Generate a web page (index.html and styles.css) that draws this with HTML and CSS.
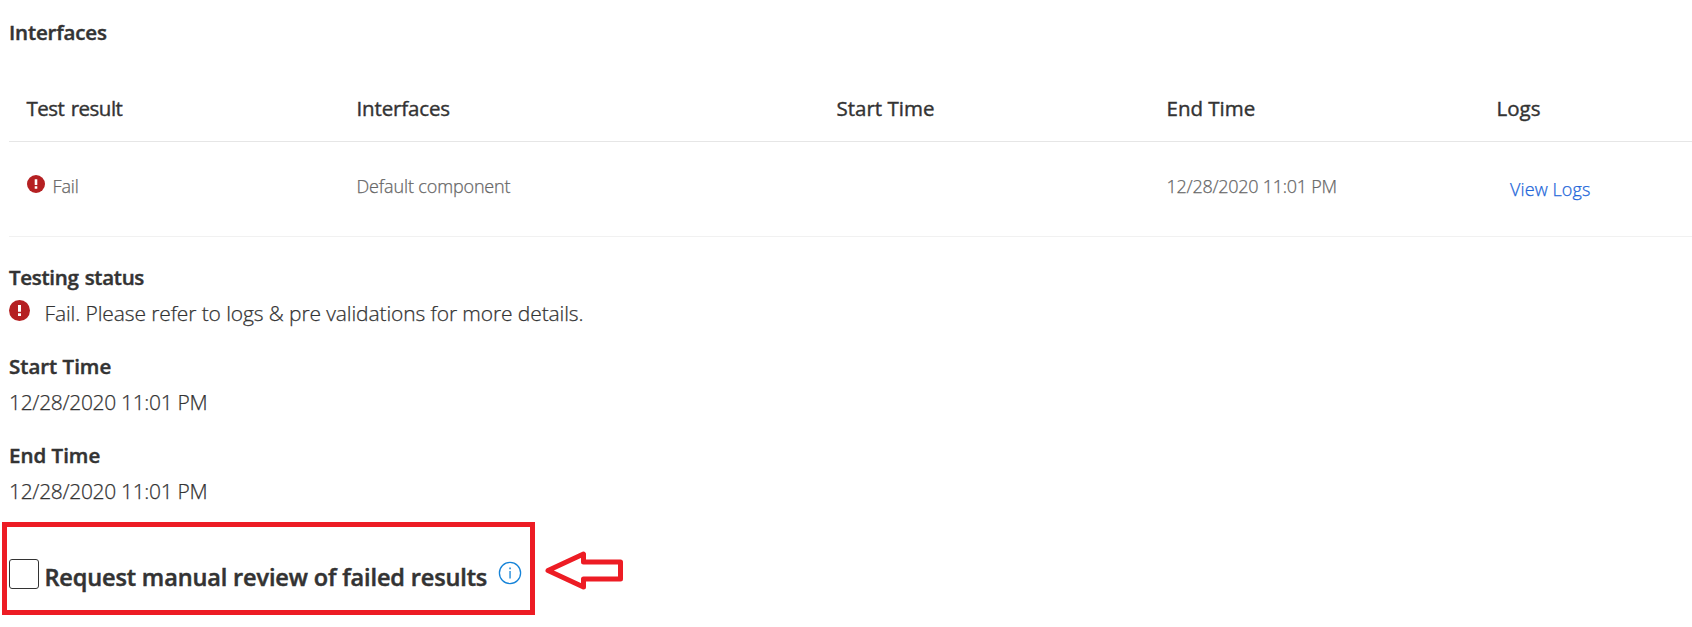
FILE: index.html
```html
<!DOCTYPE html>
<html lang="en">
<head>
<meta charset="utf-8">
<title>Test results</title>
<link rel="stylesheet" href="styles.css">
</head>
<body>
<main class="page">
  <h2 class="heading interfaces-heading">Interfaces</h2>

  <section class="table">
    <div class="row head">
      <span class="th-result">Test result</span>
      <span class="th-interfaces">Interfaces</span>
      <span class="th-start">Start Time</span>
      <span class="th-end">End Time</span>
      <span>Logs</span>
    </div>
    <div class="row body">
      <span class="result">
        <svg class="fail-icon small" viewBox="0 0 21 21"><circle cx="10.5" cy="10.5" r="10.5" fill="#b52022"/><path d="M9 5h3v6.8H9zM9 13.2h3v2.8H9z" fill="#fff"/></svg>
        <span>Fail</span>
      </span>
      <span>Default component</span>
      <span></span>
      <span class="date">12/28/2020 11:01 PM</span>
      <a class="view-logs">View Logs</a>
    </div>
  </section>

  <section class="field testing">
    <h3 class="heading testing-heading">Testing status</h3>
    <p class="value status">
      <svg class="fail-icon" viewBox="0 0 21 21"><circle cx="10.5" cy="10.5" r="10.5" fill="#b52022"/><path d="M9 5h3v6.8H9zM9 13.2h3v2.8H9z" fill="#fff"/></svg>
      <span>Fail. Please refer to logs &amp; pre validations for more details.</span>
    </p>
  </section>
  <section class="field">
    <h3 class="heading">Start Time</h3>
    <p class="value date-value">12/28/2020 11:01 PM</p>
  </section>
  <section class="field">
    <h3 class="heading end-heading">End Time</h3>
    <p class="value date-value">12/28/2020 11:01 PM</p>
  </section>

  <div class="review">
    <label class="review-box">
      <span class="checkbox"></span>
      <span class="review-label">Request manual review of failed results</span>
      <svg class="info" viewBox="0 0 24 24"><circle cx="12" cy="12" r="10.6" fill="none" stroke="#1583d8" stroke-width="1.3"/><path d="M11.4 10h1.3v7.5h-1.3zM11.3 6.600h1.5v1.6h-1.5z" fill="#1583d8"/></svg>
    </label>
    <svg class="arrow" viewBox="0 0 80 42"><path d="M3 20.5 38.5 4v8H75.500v17H38.500v8z" fill="#fff" stroke="#ed1c24" stroke-width="5" stroke-linejoin="round"/></svg>
  </div>
</main>
</body>
</html>
```
FILE: styles.css
```css
* { box-sizing: border-box; }
body {
  margin: 0;
  overflow: hidden;
  background: #fff;
  color: #333;
  font-family: "Open Sans", "Noto Sans", sans-serif;
}
h2, h3, p { margin: 0; }
.page { padding: 18px 0 0 9px; }
.heading {
  font-size: 20.5px;
  line-height: 28px;
  font-weight: 600;
  letter-spacing: 0;
  -webkit-text-stroke: 0.45px #333;
}
.interfaces-heading { letter-spacing: -0.15px; }
.testing-heading { letter-spacing: -0.28px; word-spacing: 1px; }

.table { margin-top: 48px; }
.row {
  display: grid;
  grid-template-columns: 330px 480px 330px 330px 1fr;
  padding-left: 17.5px;
  white-space: nowrap;
}
.head {
  height: 48px;
  border-bottom: 1px solid #e6e6e6;
  font-size: 20.5px;
  line-height: 28px;
  -webkit-text-stroke: 0.4px #333;
}
.th-result { letter-spacing: -0.5px; word-spacing: 1.5px; }
.th-interfaces { letter-spacing: -0.15px; }
.body {
  height: 95px;
  padding-top: 32px;
  border-bottom: 1px solid #f1f1f1;
  color: #666;
  font-size: 18px;
  line-height: 25px;
  font-weight: 300;
  letter-spacing: -0.14px;
  -webkit-text-stroke: 0.25px #666;
}
.result { display: flex; gap: 8px; align-items: flex-start; }
.date { letter-spacing: -0.26px; }
.view-logs {
  padding: 3px 0 0 13.5px;
  color: #2266d9;
  letter-spacing: 0.1px;
  -webkit-text-stroke: 0.25px #2266d9;
}
.fail-icon { width: 21px; height: 21px; flex: none; margin-top: 1px; }
.fail-icon.small { width: 18px; height: 18px; }

.field { margin-bottom: 25px; }
.testing { margin-top: 26px; }
.value {
  margin-top: 8px;
  font-size: 21px;
  line-height: 28px;
  font-weight: 300;
  letter-spacing: -0.11px;
  -webkit-text-stroke: 0.25px #333;
}
.status { display: flex; gap: 15px; }
.status .fail-icon { margin-left: -0.5px; }
.date-value { letter-spacing: -0.33px; }

.review { display: flex; margin: -8px 0 0 -7px; }
.review-box {
  display: flex;
  align-items: flex-start;
  width: 533px;
  height: 93px;
  padding: 32px 0 0 2px;
  border: 5px solid #ed1c24;
  white-space: nowrap;
}
.checkbox {
  width: 30px;
  height: 30px;
  border: 1px solid #333;
  border-radius: 3px;
}
.review-label {
  width: 444px;
  margin: 1px 0 0 5.5px;
  font-size: 23.5px;
  line-height: 34px;
  font-weight: 600;
  letter-spacing: -0.14px;
  -webkit-text-stroke: 0.5px #333;
}
.info { width: 24px; height: 24px; margin: 2px 0 0 9.5px; }
.arrow { width: 80px; height: 42px; margin: 28px 0 0 10px; }
```
